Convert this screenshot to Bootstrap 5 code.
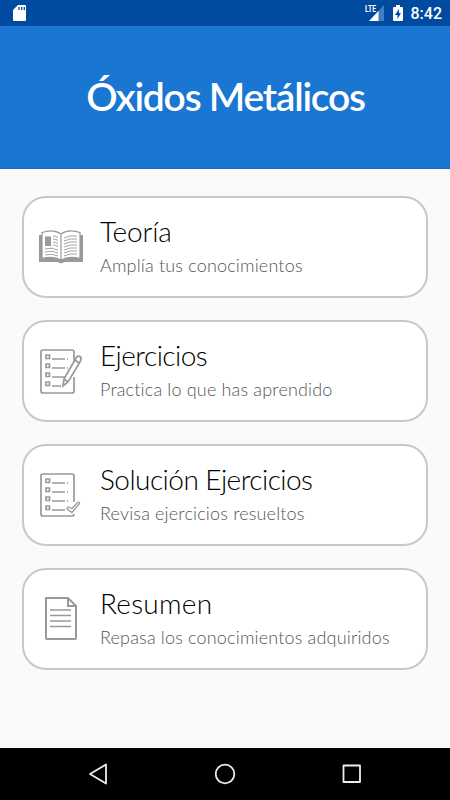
<!DOCTYPE html>
<html lang="es">
<head>
<meta charset="utf-8">
<meta name="viewport" content="width=device-width, initial-scale=1">
<title>Óxidos Metálicos</title>
<link href="https://cdn.jsdelivr.net/npm/bootstrap@5.3.0/dist/css/bootstrap.min.css" rel="stylesheet">
<style>
body{background:#fafafa;height:800px;overflow:hidden;font-family:Lato,sans-serif}
svg{display:block;flex:none}
.status-bar{height:26px;background:#004ba0;padding:0 8px 0 13px}
.clock{font:500 16px/26px Roboto,sans-serif;margin-left:8px;padding-top:2px}
.battery{margin-left:6px}
.hero{height:143px;background:#1976d2;border-bottom:1px solid #1269c8}
.hero h1{font:600 39px/48px Lato,sans-serif;letter-spacing:-1.25px;margin:0 0 3px 1px;white-space:nowrap}
.menu{padding:27px 22px 0;gap:22px}
.menu .option{height:102px;border:2px solid #c8c8c8;border-radius:24px;background:#fff;padding-left:14px}
.option h2{font:300 28px/36px Lato,sans-serif;letter-spacing:-.15px;color:#000;margin:0;white-space:nowrap}
.option h2.tight{letter-spacing:-.53px}
.option h2.loose{letter-spacing:.25px}
.option p{font:300 18px/24px Lato,sans-serif;letter-spacing:.17px;color:#555;margin:4px 0 0;white-space:nowrap}
.texts{margin-left:14px;padding-bottom:5px}
.nav-keys{height:52px;background:#000}
</style>
<script src="https://cdn.jsdelivr.net/npm/bootstrap@5.3.0/dist/js/bootstrap.bundle.min.js"></script>
</head>
<body class="d-flex flex-column">
<div class="status-bar d-flex align-items-center text-white">
<svg width="14" height="18" viewBox="0 0 14 18"><path fill="#fff" d="M5 1h7q1 0 1 1v14q0 1-1 1H1q-1 0-1-1V6z"/><path stroke="#004ba0" stroke-width="1.3" d="M6 3v3M8.700 3v3M11.300 3v3"/></svg>
<svg class="ms-auto" width="22" height="20" viewBox="0 0 22 20"><path fill="#4080bd" d="M19 2v16H4z"/><path fill="#fff" d="M13.500 8v10H4z"/><path fill="#004ba0" d="M0 0h12v10H0z"/><text x="0" y="9" fill="#fff" font-family="Roboto" font-size="8.5" font-weight="700" textLength="11" lengthAdjust="spacingAndGlyphs">LTE</text></svg>
<svg class="battery" width="10" height="18" viewBox="0 0 10 18"><path fill="#fff" d="M3 1h4v2h2q1 0 1 1v12q0 1-1 1H1q-1 0-1-1V4q0-1 1-1h2z"/><path fill="#004ba0" d="M6 5 2 11h2.500v4L8 9H6z"/></svg>
<span class="clock">8:42</span>
</div>
<header class="hero d-flex align-items-center justify-content-center text-white"><h1>Óxidos Metálicos</h1></header>
<main class="menu d-flex flex-column flex-grow-1">
<section class="option d-flex align-items-center">
<svg width="48" height="48" viewBox="0 0 48 48" fill="none" stroke="#999" stroke-width=".9"><path fill="#999" stroke="none" d="M1 12h44v27H26q-3 2.500-6 0H1z"/><path fill="#fff" stroke-width="1.200" d="M4 9.500q11-4 19 1.500v26q-8-4.500-19-1.500zM23 11q8-5.500 19-1.500v26q-11-3-19 1.500"/><path fill="#999" stroke="none" d="M7 13.500h6V23H7z"/><path d="M15 13q3 0 5 1.500M15 16q3 0 5 1.500M15 19q3 0 5 1.500M15 22q3 0 5 1.500M7 26q7-2 13 1M7 29q7-2 13 1M7 32q7-2 13 1M26 15q6-3 13-2M26 18q6-3 13-2M26 21q6-3 13-2M26 24q6-3 13-2M26 27q6-3 13-2M26 30q6-3 13-2M26 33q6-3 13-2"/></svg>
<div class="texts"><h2>Teoría</h2><p>Amplía tus conocimientos</p></div>
</section>
<section class="option d-flex align-items-center">
<svg width="48" height="48" viewBox="0 0 48 48" fill="none" stroke="#999" stroke-width="1.700"><path d="M36 15V5q0-2-2-2H5Q3 3 3 5v39q0 2 2 2h29q2 0 2-2V30"/><path d="M8 8h3.500v3.500H8zM8 17h3.500v3.500H8zM8 26h3.500v3.500H8zM8 35h3.500v3.500H8zM14 12h13M29 12h1M14 21h13M29 21h1M14 30h13M14 39h9"/><path fill="#fff" d="m26 32 12-21q2-3 4-1.500t.5 4.500L30 35l-5 4zM26 32l4 3M37 13l4 3"/></svg>
<div class="texts"><h2 class="tight">Ejercicios</h2><p>Practica lo que has aprendido</p></div>
</section>
<section class="option d-flex align-items-center">
<svg width="48" height="48" viewBox="0 0 48 48" fill="none" stroke="#999" stroke-width="1.700"><path d="M36 31V5q0-2-2-2H5Q3 3 3 5v38q0 2 2 2h29q2 0 2-2"/><path d="M8 8h3.500v3.500H8zM8 17h3.500v3.500H8zM8 26h3.500v3.500H8zM8 35h3.500v3.500H8zM14 12h13M29 12h1M14 21h13M29 21h1M14 30h13M29 30h1M14 39h13"/><path fill="#fff" stroke-width="1.300" d="m30 36 4 1.500 5.500-6q2-1 2 1L34 41.500l-5-3.500z"/></svg>
<div class="texts"><h2 class="tight">Solución Ejercicios</h2><p>Revisa ejercicios resueltos</p></div>
</section>
<section class="option d-flex align-items-center">
<svg width="48" height="48" viewBox="0 0 48 48" fill="none" stroke="#999" stroke-width="2"><path d="M8 3h22l8 8v32q0 1-1 1H9q-1 0-1-1zM30 3v8h8"/><path stroke-width="1.500" d="M12 15h21M12 20.500h21M12 26h21M12 31.500h21"/></svg>
<div class="texts"><h2 class="loose">Resumen</h2><p>Repasa los conocimientos adquiridos</p></div>
</section>
</main>
<nav class="nav-keys" aria-label="Android">
<svg width="450" height="52" viewBox="0 0 450 52" fill="none" stroke="#eee" stroke-width="1.800" stroke-linejoin="round"><path d="M106 16.500v19L90 26z"/><circle cx="225" cy="26" r="9.300"/><path d="M343.500 17.500h16.500v16.500h-16.500z"/></svg>
</nav>
</body>
</html>
